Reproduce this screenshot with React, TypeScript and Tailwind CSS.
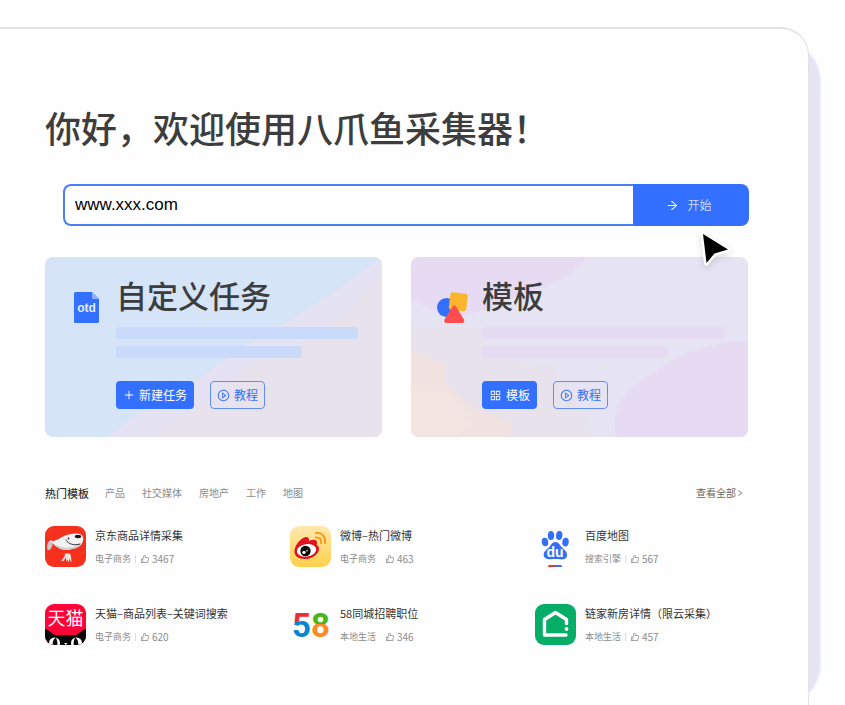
import type { ReactNode } from "react";
import {
  AiOutlineAppstore,
  AiOutlineArrowRight,
  AiOutlineLike,
  AiOutlinePlayCircle,
  AiOutlinePlus,
  AiOutlineRight,
} from "react-icons/ai";

const JdIcon = () => (
  <svg viewBox="0 0 41 41" className="size-[41px] flex-none">
    <rect width="41" height="41" rx="9" fill="#f5301c" />
    <path d="M7 14C3 14 1 20 2.500 24c3 .8 4-2 5-5z" fill="#c9c7ca" />
    <path
      d="M5 15.500c5-.5 8-2 12-4.500 6-3.500 15-4.500 19-2.500 3 2 2.500 6 1 9-3 5-12 7-19 6-5-.5-7-4-13-8z"
      fill="#f4f3f4"
    />
    <path d="M8 18.500c6 1 9 4 16 3 5-.5 9-2 12-4-3 5-11 7-18 6-4-.5-6-2.500-10-5z" fill="#cfcdd1" />
    <ellipse cx="33" cy="10.500" rx="3.200" ry="1.700" fill="#171717" />
    <path d="M21 14c2 4 8 6 14 4" fill="none" stroke="#333" strokeWidth="1" strokeLinecap="round" />
    <circle cx="23.500" cy="12.500" r=".9" fill="#333" />
    <path
      d="M20 27.500h5l1 3 .5 6-2.500-4v4l-2-3-1 2v-4l-3 4-1.500-1 3-4z"
      fill="#f1e3e3"
    />
  </svg>
);

const WeiboIcon = () => (
  <svg viewBox="0 0 41 41" className="size-[41px] flex-none">
    <defs>
      <linearGradient id="weibo" x1="0" y1="0" x2="0" y2="1">
        <stop offset="0" stopColor="#ffe9b0" />
        <stop offset="1" stopColor="#fed04a" />
      </linearGradient>
    </defs>
    <rect width="41" height="41" rx="9" fill="url(#weibo)" />
    <path
      d="M4.500 26C4 21 9 14 14 11.500c3-1.500 5.500 0 5 3.500 4-2 8.500-1.500 8 2-.2 1-.5 2 .5 2.500 2 1.500 2 5 0 7.500-3 4-8 6-13 6-6 0-10-3-10-7z"
      fill="#e1121f"
    />
    <ellipse cx="16.500" cy="24.500" rx="9.800" ry="6.200" fill="#fff" transform="rotate(-8 16 24)" />
    <circle cx="15.500" cy="25" r="5.200" fill="#090909" />
    <ellipse cx="14" cy="26.500" rx="1.700" ry="1.400" fill="#fff" />
    <circle cx="17" cy="24.700" r=".8" fill="#fff" />
    <path
      d="M26 7c6-1 10 4 9 10M26 11.500c3.500-.5 6 2 5 5.500"
      fill="none"
      stroke="#f99a1c"
      strokeWidth="2"
      strokeLinecap="round"
    />
  </svg>
);

const BaiduIcon = () => (
  <svg viewBox="0 0 41 41" className="size-[41px] flex-none">
    <g fill="#3370f5">
      <ellipse cx="10" cy="16" rx="3.200" ry="4.300" transform="rotate(-10 10 16)" />
      <ellipse cx="16" cy="9.500" rx="3.200" ry="4.500" />
      <ellipse cx="24.300" cy="9.500" rx="3.200" ry="4.500" transform="rotate(8 24 9)" />
      <ellipse cx="30.500" cy="16" rx="3.200" ry="4.300" transform="rotate(10 30 16)" />
      <path d="M20 16c4 0 5 3.500 7.500 6 3 2.500 5 4.500 4.500 8-.5 3-4 3.700-7 3.300-3-.3-6-.3-9 0-4 .4-7-1-7.300-4-.2-3.500 2-5 4.800-7.300 2.500-2.500 3.500-6 6.500-6z" />
    </g>
    <text
      x="20"
      y="31"
      textAnchor="middle"
      fontSize="14"
      className="fill-white font-['Liberation_Sans',sans-serif] font-bold"
    >
      du
    </text>
    <path d="M12.500 41l1.500-2h6v2z" fill="#da3b40" />
    <path d="M20 39h6l1.500 2H20z" fill="#3370f5" />
  </svg>
);

const TmallIcon = () => (
  <svg viewBox="0 0 41 41" className="size-[41px] flex-none">
    <defs>
      <clipPath id="tmall">
        <rect width="41" height="41" rx="9" />
      </clipPath>
    </defs>
    <g clipPath="url(#tmall)">
      <rect width="41" height="41" fill="#ff0438" />
      <path d="M0 25c4 1 6 4 10 6h21c4-2 6-5 10-6v16H0z" fill="#080808" />
      <circle cx="9.500" cy="39" r="5.500" fill="#fff" />
      <circle cx="31.500" cy="39" r="5.500" fill="#fff" />
      <path d="M8 42c-1-4 1-8 3-8 1 2 2 5 1 8zM33 42c1-4-1-8-3-8-1 2-2 5-1 8z" fill="#080808" />
      <path d="M19 39h3.500L20.700 41z" fill="#fff" />
    </g>
    <text
      x="20.500"
      y="21"
      textAnchor="middle"
      fontSize="18"
      className="fill-white font-['Noto_Sans_CJK_SC',sans-serif]"
    >
      天猫
    </text>
  </svg>
);

const City58Icon = () => (
  <svg viewBox="0 0 41 41" className="size-[41px] flex-none">
    <defs>
      <linearGradient id="five" x1="0" y1="8" x2="0" y2="34" gradientUnits="userSpaceOnUse">
        <stop offset=".38" stopColor="#ee2f35" />
        <stop offset=".38" stopColor="#0b85d0" />
      </linearGradient>
      <linearGradient id="eight" x1="0" y1="8" x2="0" y2="34" gradientUnits="userSpaceOnUse">
        <stop offset=".48" stopColor="#4cb51c" />
        <stop offset=".48" stopColor="#fb8b1e" />
      </linearGradient>
    </defs>
    <text x="2" y="33" fontSize="33" className="font-['Roboto',sans-serif] font-bold">
      <tspan fill="url(#five)">5</tspan>
      <tspan fill="url(#eight)">8</tspan>
    </text>
  </svg>
);

const LianjiaIcon = () => (
  <svg viewBox="0 0 41 41" className="size-[41px] flex-none">
    <rect width="41" height="41" rx="9" fill="#05ad66" />
    <path
      d="M31.500 19.500V15.500L20.500 8.500 9.500 15.500V31H31"
      fill="none"
      stroke="#fff"
      strokeWidth="3.400"
      strokeLinecap="round"
      strokeLinejoin="round"
    />
    <circle cx="31.500" cy="25" r="1.900" fill="#fff" />
  </svg>
);

const FileIcon = () => (
  <svg viewBox="0 0 26 32" className="h-8 w-[26px]">
    <path d="M1.500 0H18l7 7v22.500q0 1.500-1.500 1.500h-22Q0 31 0 29.500v-28Q0 0 1.500 0z" fill="#3370ff" />
    <path d="M18 0l7 7h-5.500Q18 7 18 5.500z" fill="#8db1ff" />
    <text
      x="12.500"
      y="20"
      textAnchor="middle"
      fontSize="12"
      className="fill-[#e4ecff] font-['Liberation_Sans',sans-serif] font-bold"
    >
      otd
    </text>
  </svg>
);

const ShapesIcon = () => (
  <svg viewBox="0 0 31 32" className="h-8 w-[31px]">
    <circle cx="9.500" cy="15.500" r="9.500" fill="#3370ff" />
    <rect x="12.500" y="1" width="17.500" height="17.500" rx="2.500" fill="#fdb52b" transform="rotate(7 21 10)" />
    <path d="M15.600 14.500q1.700-2.500 3.400 0l8 13q1 3.500-2 3.500H9.500q-3-.2-2-3.500z" fill="#ff4d4f" />
  </svg>
);

const CustomBackdrop = () => (
  <svg viewBox="0 0 337 180" preserveAspectRatio="none" className="absolute inset-0 size-full">
    <rect width="337" height="180" fill="#d6e4f7" />
    <path d="M337 0v180H62L100 152 145 128 200 88 240 66 285 38 320 12z" fill="#e5e3f3" />
    <path d="M337 15L300 58 265 82 210 104 170 138 110 180H337z" fill="#e7e2eb" />
  </svg>
);

const TemplateBackdrop = () => (
  <svg viewBox="0 0 337 180" preserveAspectRatio="none" className="absolute inset-0 size-full">
    <rect width="337" height="180" fill="#e6e4f3" />
    <path d="M0 70H68L75 98 140 110 165 140 182 180H0z" fill="#e7e2eb" />
    <path d="M0 92L35 108V128L62 150 100 165V180H0z" fill="#f1e2e2" />
    <path d="M0 128H32L48 148 62 165 45 180H0z" fill="#f2e4de" />
    <path d="M0 0H175C165 18 140 28 100 42 75 52 60 60 40 60 20 55 10 45 0 42z" fill="#e7dbf4" />
    <path d="M337 84C300 84 260 100 240 118 215 132 200 145 205 180H337z" fill="#e7dbf4" />
  </svg>
);

interface TaskCardProps {
  title: string;
  icon: ReactNode;
  backdrop: ReactNode;
  barColor: string;
  action: ReactNode;
}

const TaskCard = ({ title, icon, backdrop, barColor, action }: TaskCardProps) => (
  <section className="relative flex overflow-hidden rounded-lg pt-[18px] pb-7">
    {backdrop}
    <div className="relative flex w-[71px] flex-none justify-center pt-[17px] pl-3">{icon}</div>
    <div className="relative flex-1">
      <h2 className="text-[31px] leading-10 font-medium text-[#3d3d3d]">{title}</h2>
      <div className={`mt-3 h-3 w-[91%] rounded-xs ${barColor}`} />
      <div className={`mt-[7px] h-3 w-[70%] rounded-xs ${barColor}`} />
      <div className="mt-[23px] flex gap-4">
        <button
          type="button"
          className="flex h-7 items-center gap-1 rounded bg-[#3370ff] px-[7px] text-xs text-white"
        >
          {action}
        </button>
        <button
          type="button"
          className="flex h-7 items-center gap-1 rounded border border-[#5f8efa] px-1.5 text-xs text-[#3370ff]"
        >
          <AiOutlinePlayCircle className="size-[13px]" />
          教程
        </button>
      </div>
    </div>
  </section>
);

const tabs = ["产品", "社交媒体", "房地产", "工作", "地图"];

const templates = [
  { title: "京东商品详情采集", category: "电子商务", likes: 3467, icon: <JdIcon />, divider: true },
  { title: "微博–热门微博", category: "电子商务", likes: 463, icon: <WeiboIcon />, divider: false },
  { title: "百度地图", category: "搜索引擎", likes: 567, icon: <BaiduIcon />, divider: true },
  { title: "天猫–商品列表–关键词搜索", category: "电子商务", likes: 620, icon: <TmallIcon />, divider: true },
  { title: "58同城招聘职位", category: "本地生活", likes: 346, icon: <City58Icon />, divider: false },
  { title: "链家新房详情（限云采集）", category: "本地生活", likes: 457, icon: <LianjiaIcon />, divider: true },
];

const App = () => {
  return (
    <div className="flex min-h-screen bg-[#fefefe] pt-[27px] pr-9 font-['Noto_Sans_CJK_SC',sans-serif]">
      <div className="relative flex flex-1">
        <div className="absolute top-3.5 -right-3 bottom-0 w-20 rounded-r-[40px] border-r-2 border-[#e4eefe] bg-[#e6e4f3]" />
        <main className="relative flex-1 rounded-tr-[28px] border-t-2 border-r border-[#e6e2ea] bg-[#fefefe] pt-[74px] pr-[60px] pb-10 pl-[45px]">
          <h1 className="text-4xl leading-12 font-medium text-[#3d3d3d]">
            你好，欢迎使用八爪鱼采集器！
          </h1>

          <form className="relative mt-[33px] -mr-px ml-[18px] flex h-[42px]" onSubmit={(e) => e.preventDefault()}>
            <input
              type="text"
              aria-label="网址"
              defaultValue="www.xxx.com"
              className="min-w-0 flex-1 rounded-l-lg border-2 border-r-0 border-[#4a7ff8] bg-white px-2.5 font-['Liberation_Sans',sans-serif] text-[17px] text-black outline-none"
            />
            <button
              type="submit"
              className="flex w-[116px] items-center justify-center gap-2 rounded-r-lg bg-[#3370ff] pr-1 text-xs font-light text-white"
            >
              <AiOutlineArrowRight className="size-[13px]" />
              开始
            </button>
            <svg viewBox="0 0 36 38" className="absolute top-[45px] right-[15px] z-10 h-[38px] w-9 drop-shadow-md">
              <path
                d="M5 5L30 20.500 16.500 24.500 8.500 34z"
                fill="#000"
                stroke="#fff"
                strokeWidth="5"
                strokeLinejoin="round"
                paintOrder="stroke"
              />
            </svg>
          </form>

          <div className="mt-[31px] grid grid-cols-2 gap-[29px]">
            <TaskCard
              title="自定义任务"
              icon={<FileIcon />}
              backdrop={<CustomBackdrop />}
              barColor="bg-[#c9dafb]"
              action={
                <>
                  <AiOutlinePlus className="size-3" />
                  新建任务
                </>
              }
            />
            <TaskCard
              title="模板"
              icon={<ShapesIcon />}
              backdrop={<TemplateBackdrop />}
              barColor="bg-[#e7dbf4]"
              action={
                <>
                  <AiOutlineAppstore className="size-[13px]" />
                  模板
                </>
              }
            />
          </div>

          <div className="mt-12 flex items-center leading-4">
            <h3 className="mr-4 text-[11px] font-medium text-[#333]">热门模板</h3>
            <nav className="flex gap-[17px] text-[10px] text-[#8c8c8c]">
              {tabs.map((tab) => (
                <a href="#" key={tab}>
                  {tab}
                </a>
              ))}
            </nav>
            <a href="#" className="mr-1 ml-auto flex items-center text-[10px] text-[#666]">
              查看全部
              <AiOutlineRight className="size-2" />
            </a>
          </div>

          <ul className="mt-[25px] -mr-8 grid grid-cols-3 gap-y-[37px]">
            {templates.map((item) => (
              <li key={item.title} className="flex gap-[9px]">
                {item.icon}
                <div>
                  <h4 className="text-[11px] leading-[18px] text-[#333]">{item.title}</h4>
                  <p className="mt-2 flex items-center text-[9px] leading-3.5 text-[#8c8c8c]">
                    {item.category}
                    <span className={`mx-1 h-2 border-l ${item.divider ? "border-[#ddd]" : "border-transparent"}`} />
                    <AiOutlineLike className="mr-0.5 size-2.5" />
                    <span className="text-[10px]">{item.likes}</span>
                  </p>
                </div>
              </li>
            ))}
          </ul>
        </main>
      </div>
    </div>
  );
};

export default App;
